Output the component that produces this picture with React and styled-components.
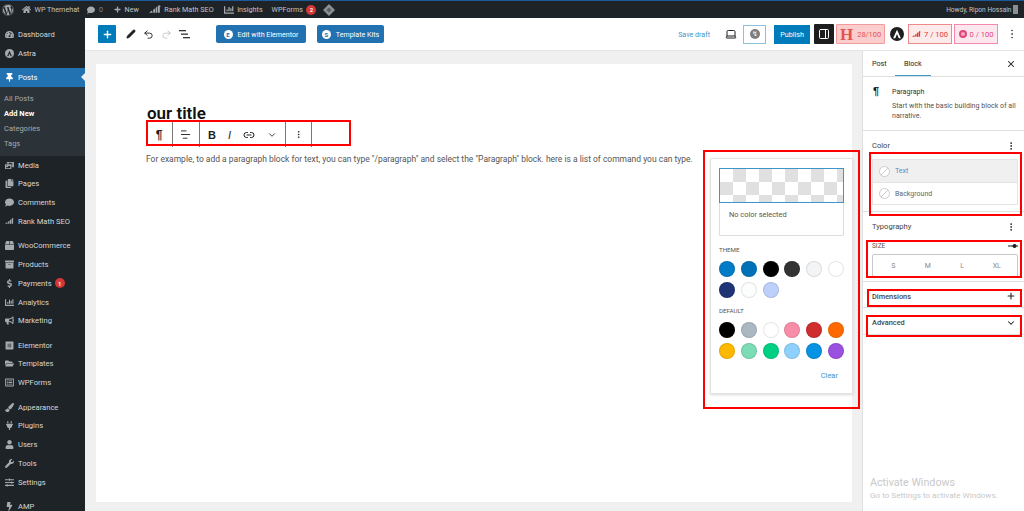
import React from "react";
import styled, { createGlobalStyle } from "styled-components";
import {
  FaWordpress, FaHome, FaComment, FaPlus, FaThumbtack, FaPhotoVideo, FaCopy, FaChartBar,
  FaBullhorn, FaFolderOpen, FaPaintBrush, FaPlug, FaUser, FaWrench, FaSlidersH, FaTachometerAlt,
  FaBox, FaArchive, FaDollarSign, FaRegListAlt, FaBolt, FaElementor,
} from "react-icons/fa";
import {
  Plus, Pencil, Undo2, Redo2, Laptop, PanelRight, EllipsisVertical, X, Link2, ChevronDown,
} from "lucide-react";

const GlobalStyle = createGlobalStyle`
  html, body { margin: 0; padding: 0; height: 100%; overflow: hidden; }
  body { font-family: Roboto, "Liberation Sans", sans-serif; background: #f0f0f1; }
  * { box-sizing: border-box; }
`;

const RankIcon = ({ size = 11, color = "currentColor" }) => (
  <svg width={size} height={size * 0.7} viewBox="0 0 20 14" fill={color}>
    <path d="M0 13l5-4 1 4zM7 13V8l3-2v7zM11 13V5l3-3v11zM15 13V3l1-3 4 2-2 1v10z" />
  </svg>
);

const ThemeLogo = ({ size = 10 }) => (
  <svg width={size} height={size} viewBox="0 0 20 20">
    <circle cx="10" cy="10" r="10" fill="currentColor" />
    <path d="M10 4l5.5 12h-3L10 10l-2.500 6h-3z" fill="var(--logo-cut, #1d2327)" />
  </svg>
);

const Diamond = () => (
  <svg width="12" height="12" viewBox="0 0 12 12">
    <path d="M6 0l6 6-6 6-6-6z" fill="#8c8f94" />
    <path d="M6 3.500l2.500 2.500L6 8.500 3.500 6z" fill="#5a5f64" />
  </svg>
);

const menuGroups = [
  [["Dashboard", FaTachometerAlt], ["Astra", ThemeLogo]],
  [["Posts", FaThumbtack, "active"], ["Media", FaPhotoVideo], ["Pages", FaCopy], ["Comments", FaComment], ["Rank Math SEO", RankIcon]],
  [["WooCommerce", FaBox], ["Products", FaArchive], ["Payments", FaDollarSign, "badge"], ["Analytics", FaChartBar], ["Marketing", FaBullhorn]],
  [["Elementor", FaElementor], ["Templates", FaFolderOpen], ["WPForms", FaRegListAlt]],
  [["Appearance", FaPaintBrush], ["Plugins", FaPlug], ["Users", FaUser], ["Tools", FaWrench], ["Settings", FaSlidersH]],
  [["AMP", FaBolt]],
];

const subItems = ["All Posts", "Add New", "Categories", "Tags"];

const themeColors = ["#007cc7", "#0071b8", "#000000", "#333333", "#f3f4f6", "#ffffff", "#1f3474", "#fcfdfd", "#bdd0fb"];
const defaultColors = ["#000000", "#abb8c3", "#ffffff", "#f78da7", "#cf2e2e", "#ff6900", "#fcb900", "#7bdcb5", "#00d084", "#8ed1fc", "#0693e3", "#9b51e0"];

const highlights = [
  [146, 120, 205, 26],
  [703, 150, 157, 259],
  [869, 152, 153, 64],
  [866, 240, 156, 38],
  [867, 289, 155, 18],
  [866, 315, 156, 22],
];

export default function App() {
  return (
    <>
      <GlobalStyle />
      <Screen>
        <AdminBar>
          <BarGroup>
            <BarItem><FaWordpress size={12} color="#a7aaad" /></BarItem>
            <BarItem $left={8}><FaHome size={9} color="#a7aaad" />WP Themehat</BarItem>
            <BarItem $left={8}><FaComment size={8} color="#a7aaad" /><Muted>0</Muted></BarItem>
            <BarItem $left={11}><FaPlus size={7} color="#a7aaad" />New</BarItem>
            <BarItem $left={10}><RankIcon size={12} color="#a7aaad" />Rank Math SEO</BarItem>
            <BarItem $left={10}><FaChartBar size={10} color="#a7aaad" />Insights</BarItem>
            <BarItem $left={9}>WPForms<Count>2</Count></BarItem>
            <BarItem $left={7}><Diamond /></BarItem>
          </BarGroup>
          <BarItem><Howdy>Howdy, Ripon Hossain</Howdy><Avatar /></BarItem>
        </AdminBar>
        <Body>
          <Sidebar>
            {menuGroups.map((group, i) => (
              <MenuGroup key={i}>
                {group.map(([label, Icon, kind]) => (
                  <React.Fragment key={label}>
                    <MenuItem $active={kind === "active"}>
                      <MenuIcon $active={kind === "active"}><Icon size={9} /></MenuIcon>
                      {label}
                      {kind === "badge" && <Count>1</Count>}
                      {kind === "active" && <ActiveArrow />}
                    </MenuItem>
                    {kind === "active" && (
                      <SubMenu>
                        {subItems.map(s => (
                          <SubItem key={s} $current={s === "Add New"}>{s}</SubItem>
                        ))}
                      </SubMenu>
                    )}
                  </React.Fragment>
                ))}
              </MenuGroup>
            ))}
          </Sidebar>
          <Main>
            <EditorHeader>
              <HeaderLeft>
                <InserterButton><Plus size={11} strokeWidth={3} /></InserterButton>
                <ToolIcons>
                  <Pencil size={10} fill="#1e1e1e" strokeWidth={1.500} />
                  <Undo2 size={11} />
                  <Redo2 size={11} color="#c4c4c4" />
                  <ListLines />
                </ToolIcons>
                <KitButton $width={90}><KitDot>E</KitDot>Edit with Elementor</KitButton>
                <KitButton $width={67}><KitDot>S</KitDot>Template Kits</KitButton>
              </HeaderLeft>
              <HeaderRight>
                <SaveDraft>Save draft</SaveDraft>
                <Laptop size={12} color="#1e1e1e" />
                <OutlineButton><ZapDot>↯</ZapDot></OutlineButton>
                <PublishButton>Publish</PublishButton>
                <SettingsToggle><PanelRight size={12} /></SettingsToggle>
                <HeadlineScore><BigH>H</BigH>28/100</HeadlineScore>
                <AstraLogo><ThemeLogo size={14} /></AstraLogo>
                <ScoreBadge $pink={false}><RankIcon size={9} />7 / 100</ScoreBadge>
                <ScoreBadge $pink><PinkDot />0 / 100</ScoreBadge>
                <MoreButton><EllipsisVertical size={12} /></MoreButton>
              </HeaderRight>
            </EditorHeader>
            <Workspace>
              <Canvas>
                <Page>
                  <PostTitle>our title</PostTitle>
                  <BlockToolbar>
                    <ToolbarGroup $width={27}><Glyph>¶</Glyph></ToolbarGroup>
                    <ToolbarGroup $width={27}><AlignLines /></ToolbarGroup>
                    <ToolbarGroup $width={86}>
                      <Bold>B</Bold>
                      <Italic>I</Italic>
                      <Link2 size={12} />
                      <ChevronDown size={10} />
                    </ToolbarGroup>
                    <ToolbarGroup $width={26}><EllipsisVertical size={11} /></ToolbarGroup>
                  </BlockToolbar>
                  <Paragraph>
                    For example, to add a paragraph block for text, you can type "/paragraph" and select the "Paragraph" block. here is a list of command you can type.
                  </Paragraph>
                </Page>
              </Canvas>
              <Inspector>
                <Tabs>
                  <TabRow>
                    <Tab>Post</Tab>
                    <Tab $active>Block</Tab>
                  </TabRow>
                  <X size={10} color="#1e1e1e" strokeWidth={2.500} />
                </Tabs>
                <BlockCard>
                  <BlockGlyph>¶</BlockGlyph>
                  <div>
                    <BlockName>Paragraph</BlockName>
                    <BlockText>Start with the basic building block of all narrative.</BlockText>
                  </div>
                </BlockCard>
                <PanelSection $height={81}>
                  <PanelHead>Color<EllipsisVertical size={10} /></PanelHead>
                  <ColorList>
                    <ColorRow $active><EmptySwatch />Text</ColorRow>
                    <ColorRow><EmptySwatch />Background</ColorRow>
                  </ColorList>
                </PanelSection>
                <PanelSection $height={70}>
                  <PanelHead>Typography<EllipsisVertical size={10} /></PanelHead>
                  <SizeHead>SIZE<SliderMark /></SizeHead>
                  <SizeBox>
                    {["S", "M", "L", "XL"].map(s => <span key={s}>{s}</span>)}
                  </SizeBox>
                </PanelSection>
                <CollapsedRow $height={26}>Dimensions<Plus size={10} color="#1e1e1e" strokeWidth={2.500} /></CollapsedRow>
                <CollapsedRow $height={27}>Advanced<ChevronDown size={10} color="#1e1e1e" strokeWidth={2.500} /></CollapsedRow>
                <Activate>
                  <strong>Activate Windows</strong>
                  <span>Go to Settings to activate Windows.</span>
                </Activate>
              </Inspector>
            </Workspace>
          </Main>
        </Body>

        <ColorPopover>
          <PreviewCard>
            <Checker />
            <NoColor>No color selected</NoColor>
          </PreviewCard>
          <PaletteLabel $top={9.5}>THEME</PaletteLabel>
          <Swatches>
            {themeColors.map((c, i) => <Swatch key={i} $color={c} />)}
          </Swatches>
          <PaletteLabel $top={8.7}>DEFAULT</PaletteLabel>
          <Swatches>
            {defaultColors.map((c, i) => <Swatch key={i} $color={c} />)}
          </Swatches>
          <ClearRow>Clear</ClearRow>
        </ColorPopover>

        {highlights.map(([x, y, w, h]) => (
          <Highlight key={`${x}-${y}`} $x={x} $y={y} $w={w} $h={h} />
        ))}
      </Screen>
    </>
  );
}

const Screen = styled.div`
  position: relative;
  width: 1024px;
  height: 511px;
  overflow: hidden;
  display: flex;
  flex-direction: column;
  background: #f0f0f1;
`;

const AdminBar = styled.div`
  height: 18px;
  flex: none;
  background: #1d2327;
  border-top: 1px solid #1b5a9a;
  padding: 0 6px 0 2px;
  display: flex;
  align-items: center;
  justify-content: space-between;
  color: #c3c4c7;
  font-size: 7.200px;
`;

const BarGroup = styled.div`
  display: flex;
  align-items: center;
`;

const BarItem = styled.div`
  display: flex;
  align-items: center;
  gap: 3.500px;
  margin-left: ${p => p.$left || 0}px;
`;

const Howdy = styled.span`
  font-size: 6.600px;
`;

const Muted = styled.span`
  color: #7e8387;
`;

const Count = styled.span`
  width: 10px;
  height: 10px;
  margin-left: 3px;
  border-radius: 50%;
  background: #d63638;
  color: #fff;
  font-size: 6px;
  font-weight: 600;
  display: inline-flex;
  align-items: center;
  justify-content: center;
  ${BarItem} & { margin-left: 0; }
`;

const Avatar = styled.span`
  width: 5px;
  height: 9px;
  margin-left: -2px;
  background: #8a8f94;
`;

const Body = styled.div`
  flex: 1;
  min-height: 0;
  display: flex;
`;

const Sidebar = styled.nav`
  width: 85px;
  flex: none;
  padding-top: 7px;
  background: #1d2327;
  display: flex;
  flex-direction: column;
  gap: 5.600px;
`;

const MenuGroup = styled.div`
  display: flex;
  flex-direction: column;
`;

const MenuItem = styled.div`
  position: relative;
  height: 18.750px;
  display: flex;
  align-items: center;
  font-size: 7.600px;
  color: ${p => (p.$active ? "#fff" : "#d5d7d9")};
  background: ${p => (p.$active ? "#2271b1" : "transparent")};
  --logo-cut: #1d2327;
`;

const MenuIcon = styled.span`
  width: 18px;
  flex: none;
  display: flex;
  justify-content: center;
  color: ${p => (p.$active ? "#fff" : "#a7aaad")};
`;

const ActiveArrow = styled.span`
  position: absolute;
  right: 0;
  top: 5px;
  border: 4px solid transparent;
  border-right-color: #f0f0f1;
  border-left-width: 0;
`;

const SubMenu = styled.div`
  background: #2c3338;
  padding: 4.500px 0 4.500px 4px;
  display: flex;
  flex-direction: column;
`;

const SubItem = styled.div`
  height: 15px;
  display: flex;
  align-items: center;
  font-size: 7.500px;
  font-weight: ${p => (p.$current ? 700 : 400)};
  color: ${p => (p.$current ? "#fff" : "#a4a9ae")};
`;

const Main = styled.div`
  flex: 1;
  min-width: 0;
  display: flex;
  flex-direction: column;
`;

const EditorHeader = styled.header`
  height: 33px;
  flex: none;
  background: #fff;
  border-bottom: 1px solid #e5e5e5;
  padding: 0 6px 0 13px;
  display: flex;
  align-items: center;
  justify-content: space-between;
`;

const HeaderLeft = styled.div`
  display: flex;
  align-items: center;
`;

const InserterButton = styled.div`
  width: 18px;
  height: 18px;
  background: #007cba;
  color: #fff;
  border-radius: 1px;
  display: flex;
  align-items: center;
  justify-content: center;
`;

const ToolIcons = styled.div`
  width: 80px;
  padding: 0 6px 0 10px;
  display: flex;
  align-items: center;
  justify-content: space-between;
  color: #1e1e1e;
  margin-right: 20px;
`;

const ListLines = () => (
  <svg width="11" height="9" viewBox="0 0 11 9" fill="#333">
    <rect x="0" y="0" width="7" height="1.300" />
    <rect x="2" y="3.500" width="7" height="1.300" />
    <rect x="4" y="7" width="7" height="1.300" />
  </svg>
);

const KitButton = styled.div`
  width: ${p => p.$width}px;
  height: 18px;
  margin-right: 11px;
  background: #2271b1;
  border-radius: 2px;
  color: #fff;
  font-size: 7.100px;
  display: flex;
  align-items: center;
  justify-content: center;
  gap: 5px;
  white-space: nowrap;
`;

const KitDot = styled.span`
  width: 9px;
  height: 9px;
  border-radius: 50%;
  background: #fff;
  color: #2271b1;
  font-size: 6px;
  font-weight: 700;
  display: flex;
  align-items: center;
  justify-content: center;
`;

const HeaderRight = styled.div`
  display: flex;
  align-items: center;
`;

const SaveDraft = styled.span`
  font-size: 7.100px;
  color: #3f94c8;
  margin-right: 15px;
`;

const OutlineButton = styled.div`
  width: 23px;
  height: 19px;
  margin-left: 6px;
  margin-right: 8px;
  border: 1px solid #8cc0de;
  display: flex;
  align-items: center;
  justify-content: center;
`;

const ZapDot = styled.span`
  width: 10px;
  height: 10px;
  border-radius: 50%;
  background: #7d7d7d;
  color: #fff;
  font-size: 7px;
  line-height: 10px;
  text-align: center;
`;

const PublishButton = styled.div`
  width: 36px;
  height: 19px;
  margin-right: 4px;
  background: #007cba;
  color: #fff;
  font-size: 7.200px;
  display: flex;
  align-items: center;
  justify-content: center;
`;

const SettingsToggle = styled.div`
  width: 20px;
  height: 20px;
  margin-right: 2px;
  background: #1e1e1e;
  color: #fff;
  border-radius: 1px;
  display: flex;
  align-items: center;
  justify-content: center;
`;

const HeadlineScore = styled.div`
  width: 49px;
  height: 20px;
  margin-right: 5px;
  background: #fccdcd;
  border: 1px solid #f39a9a;
  border-radius: 1px;
  color: #e4534f;
  font-size: 7.400px;
  display: flex;
  align-items: center;
  gap: 4px;
  padding-left: 3px;
`;

const BigH = styled.span`
  font-family: "Liberation Serif", serif;
  font-size: 17px;
  font-weight: 700;
  line-height: 1;
`;

const AstraLogo = styled.div`
  width: 14px;
  height: 14px;
  margin-right: 4px;
  color: #1e1e1e;
  --logo-cut: #fff;
  display: flex;
`;

const ScoreBadge = styled.div`
  width: 44px;
  height: 20px;
  margin-right: 2px;
  background: ${p => (p.$pink ? "#fde7ee" : "#fdeaea")};
  border: 1px solid ${p => (p.$pink ? "#f58aaa" : "#ef8a8a")};
  color: ${p => (p.$pink ? "#e0457b" : "#dd3a3a")};
  font-size: 7.600px;
  display: flex;
  align-items: center;
  justify-content: center;
  gap: 3px;
`;

const PinkDot = styled.span`
  width: 8px;
  height: 8px;
  border-radius: 50%;
  border: 2px solid #e0457b;
  background: #f7a8c0;
`;

const MoreButton = styled.div`
  width: 13px;
  margin-left: 5px;
  color: #555;
  display: flex;
  justify-content: center;
`;

const Workspace = styled.div`
  flex: 1;
  min-height: 0;
  display: flex;
`;

const Canvas = styled.main`
  width: 777px;
  flex: none;
  padding: 13px 10px 9px 11px;
  display: flex;
`;

const Page = styled.section`
  flex: 1;
  background: #fff;
  padding: 40px 0 0 51px;
`;

const PostTitle = styled.h1`
  margin: 0;
  height: 17px;
  font-size: 17px;
  line-height: 18px;
  font-weight: 600;
  color: #111;
`;

const BlockToolbar = styled.div`
  width: 205px;
  height: 26px;
  margin-left: -1px;
  border-top: 1px solid #8d8d8d;
  display: flex;
  color: #1e1e1e;
`;

const ToolbarGroup = styled.div`
  width: ${p => p.$width}px;
  border-right: 1px solid #777;
  padding: 0 8px;
  display: flex;
  align-items: center;
  justify-content: ${p => (p.$width > 40 ? "space-between" : "center")};
`;

const Glyph = styled.span`
  font-family: "Liberation Sans", sans-serif;
  font-size: 12px;
  font-weight: 700;
`;

const AlignLines = () => (
  <svg width="11" height="10" viewBox="0 0 11 10" fill="#1e1e1e">
    <rect x="0" y="0" width="6" height="1" />
    <rect x="0" y="4" width="10" height="1" />
    <rect x="2" y="8" width="5" height="1" />
  </svg>
);

const Bold = styled.span`
  font-family: "Liberation Sans", sans-serif;
  font-size: 11px;
  font-weight: 700;
`;

const Italic = styled.span`
  font-family: "Liberation Sans", sans-serif;
  font-size: 11px;
  font-style: italic;
`;

const Paragraph = styled.p`
  margin: 6px 0 0 -1px;
  width: 560px;
  font-size: 8.480px;
  line-height: 12px;
  color: #555;
  white-space: nowrap;
`;

const Inspector = styled.aside`
  position: relative;
  flex: 1;
  min-width: 0;
  background: #fff;
  border-left: 1px solid #e0e0e0;
  display: flex;
  flex-direction: column;
`;

const Tabs = styled.div`
  height: 26px;
  flex: none;
  padding: 0 8px 0 9px;
  border-bottom: 1px solid #e0e0e0;
  display: flex;
  align-items: stretch;
  justify-content: space-between;
  > svg { align-self: center; }
`;

const TabRow = styled.div`
  display: flex;
`;

const Tab = styled.div`
  min-width: 23px;
  padding: 0 ${p => (p.$active ? 9 : 0)}px;
  font-size: 7.200px;
  color: #1e1e1e;
  display: flex;
  align-items: center;
  box-shadow: ${p => (p.$active ? "inset 0 -1px 0 #3f94c8" : "none")};
`;

const BlockCard = styled.div`
  height: 54px;
  flex: none;
  padding: 8px 8px 0 10px;
  border-bottom: 1px solid #e0e0e0;
  display: flex;
`;

const BlockGlyph = styled.span`
  width: 19px;
  flex: none;
  font-family: "Liberation Sans", sans-serif;
  font-size: 11px;
  font-weight: 700;
  line-height: 13px;
  color: #1e1e1e;
`;

const BlockName = styled.div`
  font-size: 7.100px;
  line-height: 13px;
  color: #333;
`;

const BlockText = styled.div`
  font-size: 7.100px;
  line-height: 10px;
  margin-top: 3px;
  color: #555;
`;

const PanelSection = styled.section`
  height: ${p => p.$height}px;
  flex: none;
  padding: 0 6px 0 9px;
  border-bottom: 1px solid #e0e0e0;
`;

const PanelHead = styled.div`
  height: 28px;
  padding: 1px 2px 0 0;
  display: flex;
  align-items: center;
  justify-content: space-between;
  font-size: 7.600px;
  color: #444;
  > svg { color: #1e1e1e; }
`;

const ColorList = styled.div`
  border: 1px solid #e4e4e4;
  border-radius: 1px;
`;

const ColorRow = styled.div`
  height: 22px;
  padding-left: 6px;
  display: flex;
  align-items: center;
  gap: 5px;
  font-size: 7px;
  color: ${p => (p.$active ? "#3f94c8" : "#666")};
  background: ${p => (p.$active ? "#f0f0f0" : "#fff")};
  & + & { border-top: 1px solid #e4e4e4; }
`;

const EmptySwatch = styled.span`
  width: 11px;
  height: 11px;
  border-radius: 50%;
  border: 1px solid #ccc;
  background: linear-gradient(135deg, transparent 47%, #ccc 47%, #ccc 53%, transparent 53%), #fff;
`;

const SizeHead = styled.div`
  height: 8px;
  margin-top: 2px;
  font-size: 6.500px;
  line-height: 8px;
  color: #555;
  display: flex;
  align-items: center;
  justify-content: space-between;
`;

const SliderMark = () => (
  <svg width="10" height="6" viewBox="0 0 10 6" fill="#1e1e1e">
    <rect x="0" y="2.500" width="10" height="1" />
    <circle cx="6.500" cy="3" r="2" />
  </svg>
);

const SizeBox = styled.div`
  height: 23px;
  margin-top: 4px;
  border: 1px solid #c8c8c8;
  border-radius: 2px;
  padding: 0 3px;
  display: grid;
  grid-template-columns: repeat(4, 1fr);
  align-items: center;
  justify-items: center;
  font-size: 7px;
  color: #8a8a8a;
`;

const CollapsedRow = styled.div`
  height: ${p => p.$height}px;
  flex: none;
  padding: 3px 8px 0 9px;
  border-bottom: 1px solid #e0e0e0;
  display: flex;
  align-items: center;
  justify-content: space-between;
  font-size: 7.400px;
  font-weight: 500;
  color: #444;
`;

const Activate = styled.div`
  position: absolute;
  left: 7px;
  top: 424px;
  display: flex;
  flex-direction: column;
  color: #c9c9c9;
  strong { font-size: 10.700px; line-height: 15px; font-weight: 400; }
  span { font-size: 8.100px; line-height: 11px; }
`;

const ColorPopover = styled.div`
  position: absolute;
  left: 710px;
  top: 158px;
  width: 143px;
  height: 236px;
  padding: 9px 8px;
  background: #fff;
  border: 1px solid #e2e2e2;
  border-radius: 1px;
  box-shadow: 0 1px 3px rgba(0, 0, 0, 0.15);
`;

const PreviewCard = styled.div`
  height: 68px;
  border: 1px solid #ddd;
  border-radius: 1px;
`;

const Checker = styled.div`
  height: 35px;
  margin: -1px -1px 0;
  border: 1px solid #3f94c8;
  background-color: #fff;
  background-image: repeating-conic-gradient(#e0e0e0 0 25%, #fff 0 50%);
  background-size: 26px 26px;
`;

const NoColor = styled.div`
  padding: 7px 9px;
  font-size: 7.400px;
  line-height: 10px;
  color: #555;
`;

const PaletteLabel = styled.div`
  margin-top: ${p => p.$top}px;
  font-size: 6.200px;
  line-height: 8px;
  color: #555;
`;

const Swatches = styled.div`
  margin-top: 7px;
  display: grid;
  grid-template-columns: repeat(6, 16px);
  justify-content: space-between;
  row-gap: 5.500px;
`;

const Swatch = styled.span`
  width: 16px;
  height: 16px;
  border-radius: 50%;
  background: ${p => p.$color};
  box-shadow: inset 0 0 0 1px rgba(0, 0, 0, 0.1);
`;

const ClearRow = styled.div`
  margin-top: 12px;
  padding-right: 6px;
  text-align: right;
  font-size: 7.500px;
  line-height: 10px;
  color: #3f94c8;
`;

const Highlight = styled.div`
  position: absolute;
  left: ${p => p.$x}px;
  top: ${p => p.$y}px;
  width: ${p => p.$w}px;
  height: ${p => p.$h}px;
  border: 2px solid #f00;
  pointer-events: none;
`;
